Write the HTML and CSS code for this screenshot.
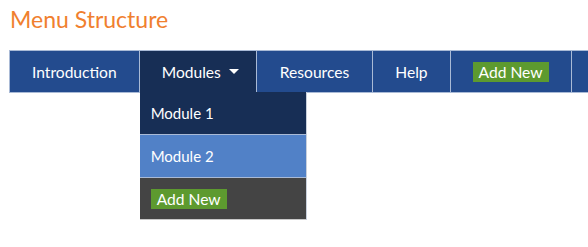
FILE: index.html
```html
<!DOCTYPE html>
<html>
<head>
<meta charset="utf-8">
<link rel="stylesheet" href="styles.css">
</head>
<body>
<div class="page">
  <h1 class="title">Menu Structure</h1>
  <nav class="nav">
    <ul class="menu">
      <li class="item"><a class="link">Introduction</a></li>
      <li class="item item-open">
        <a class="link link-toggle">Modules<span class="caret"></span></a>
        <ul class="dropdown">
          <li class="sub sub-active">Module 1</li>
          <li class="sub sub-hover">Module 2</li>
          <li class="sub sub-add"><span class="badge">Add New</span></li>
        </ul>
      </li>
      <li class="item"><a class="link link-wide">Resources</a></li>
      <li class="item"><a class="link">Help</a></li>
      <li class="item"><a class="link"><span class="badge">Add New</span></a></li>
      <li class="item item-last"><a class="link"></a></li>
    </ul>
  </nav>
</div>
</body>
</html>
```
FILE: styles.css
```css
* { box-sizing: border-box; }
html, body { margin: 0; padding: 0; background: #fff; }
body { font-family: Lato, "Open Sans", sans-serif; min-height: 247px; }
.page { padding: 0 0 0 9px; min-height: 247px; }
.title {
  margin: 6px 0 0 1px;
  font-size: 23px;
  line-height: 26px;
  font-weight: 400;
  color: #f0802f;
}
.nav { margin-top: 18px; }
.menu {
  list-style: none;
  margin: 0;
  padding: 0;
  display: flex;
  border: 1px solid #a9bad6;
  border-right: none;
  background: #234b8e;
}
.item {
  position: relative;
  flex: 0 0 auto;
  border-right: 1px solid #a9bad6;
}
.link {
  display: flex;
  align-items: center;
  height: 41px;
  padding: 0 22px;
  color: #fff;
  font-size: 15.6px;
  white-space: nowrap;
}
.link-toggle { padding-right: 17px; }
.link-wide { padding: 0 23px; }
.item-open { background: #172e55; }
.caret {
  display: inline-block;
  width: 0; height: 0;
  margin-left: 8px;
  border-left: 5px solid transparent;
  border-right: 5px solid transparent;
  border-top: 5px solid #fff;
}
.item-last { flex: 1 1 auto; border-right: none; }
.badge {
  display: inline-block;
  background: #5d9a2f;
  color: #fff;
  font-size: 15.6px;
  line-height: 20px;
  height: 20px;
  padding: 0 6px;
  white-space: nowrap;
}
.dropdown {
  position: absolute;
  z-index: 5;
  left: 0;
  top: 41px;
  width: 167px;
  margin: 0;
  padding: 0;
  list-style: none;
  border-right: 1px solid #c8d0dc;
}
.sub {
  height: 43px;
  display: flex;
  align-items: center;
  padding-left: 11px;
  color: #fff;
  font-size: 15px;
  border-bottom: 1px solid #a9bad6;
}
.sub .badge { font-size: 15.6px; }
.sub-active { background: #172e55; }
.sub-hover { background: #5181c7; }
.sub-add { background: #444444; border-bottom-color: #c8c8c8; height: 42px; }
```
